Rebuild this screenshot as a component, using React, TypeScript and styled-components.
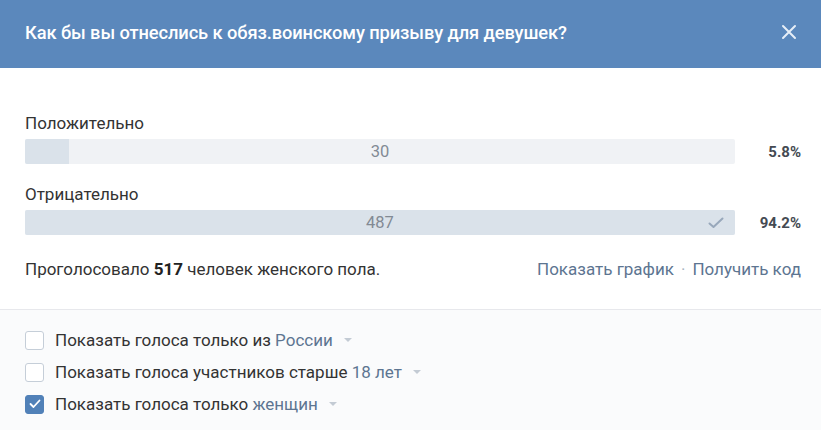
import React from "react";
import styled, { createGlobalStyle } from "styled-components";

const GlobalStyle = createGlobalStyle`
  html, body {
    margin: 0;
    padding: 0;
    background: #ffffff;
  }
  body {
    font-family: Roboto, "Open Sans", "Noto Sans", sans-serif;
    -webkit-font-smoothing: antialiased;
  }
`;

type Answer = { label: string; count: number; percent: string; mine?: boolean };

const answers: Answer[] = [
  { label: "Положительно", count: 30, percent: "5.8%" },
  { label: "Отрицательно", count: 487, percent: "94.2%", mine: true },
];

const maxCount = Math.max(...answers.map((a) => a.count));

type Filter = { text: string; value: string; checked?: boolean };

const filters: Filter[] = [
  { text: "Показать голоса только из", value: "России" },
  { text: "Показать голоса участников старше", value: "18 лет" },
  { text: "Показать голоса только", value: "женщин", checked: true },
];

export default function App() {
  return (
    <>
      <GlobalStyle />
      <Box>
        <Header>
          <Title>Как бы вы отнеслись к обяз.воинскому призыву для девушек?</Title>
          <Close aria-label="Закрыть">
            <svg width="16" height="16" viewBox="0 0 16 16">
              <path d="M2 2 L14 14 M14 2 L2 14" stroke="#e6eef7" strokeWidth="2" strokeLinecap="round" />
            </svg>
          </Close>
        </Header>
        <Results>
          {answers.map((a) => (
            <AnswerBlock key={a.label}>
              <AnswerLabel>{a.label}</AnswerLabel>
              <AnswerRow>
                <Bar>
                  <Fill style={{ width: `${(a.count / maxCount) * 100}%` }} />
                  <Count>{a.count}</Count>
                  {a.mine && (
                    <Check width="16" height="12" viewBox="0 0 16 12">
                      <path d="M1.5 6.5 L5.5 10 L14.5 1.5" fill="none" stroke="#98a8bb" strokeWidth="2" strokeLinecap="round" strokeLinejoin="round" />
                    </Check>
                  )}
                </Bar>
                <Percent>{a.percent}</Percent>
              </AnswerRow>
            </AnswerBlock>
          ))}
          <Summary>
            <span>
              Проголосовало <b>517</b> человек женского пола.
            </span>
            <Links>
              <Link>Показать график</Link>
              <Dot>·</Dot>
              <Link>Получить код</Link>
            </Links>
          </Summary>
        </Results>
        <Filters>
          {filters.map((f) => (
            <FilterRow key={f.value}>
              <CheckBox $checked={f.checked}>
                {f.checked && (
                  <svg width="12" height="10" viewBox="0 0 12 10">
                    <path d="M1.5 5 L4.5 8 L10.5 1.5" fill="none" stroke="#ffffff" strokeWidth="1.8" strokeLinecap="round" strokeLinejoin="round" />
                  </svg>
                )}
              </CheckBox>
              <FilterText>
                {f.text} <FilterValue>{f.value}</FilterValue>
              </FilterText>
              <Caret width="10" height="6" viewBox="0 0 10 6">
                <path d="M1 1 L5 5 L9 1 Z" fill="#c3cbd4" />
              </Caret>
            </FilterRow>
          ))}
        </Filters>
      </Box>
    </>
  );
}

const Box = styled.div`
  width: 821px;
  height: 430px;
  display: flex;
  flex-direction: column;
  background: #ffffff;
  overflow: hidden;
`;

const Header = styled.div`
  height: 68px;
  flex-shrink: 0;
  display: flex;
  align-items: center;
  justify-content: space-between;
  padding: 0 20px 4px 25px;
  box-sizing: border-box;
  background: #5b88bc;
`;

const Title = styled.div`
  color: #ffffff;
  font-size: 18.3px;
  font-weight: 500;
  letter-spacing: -0.1px;
`;

const Close = styled.div`
  width: 24px;
  height: 24px;
  display: flex;
  align-items: center;
  justify-content: center;
`;

const Results = styled.div`
  padding: 45px 20px 0 25px;
  display: flex;
  flex-direction: column;
  gap: 20px;
  height: 242px;
  box-sizing: border-box;
  border-bottom: 1px solid #e7e8ec;
  flex-shrink: 0;
`;

const AnswerBlock = styled.div`
  display: flex;
  flex-direction: column;
  gap: 6px;
`;

const AnswerLabel = styled.div`
  font-size: 17px;
  color: #333333;
  line-height: 20px;
`;

const AnswerRow = styled.div`
  display: flex;
  align-items: center;
`;

const Bar = styled.div`
  position: relative;
  width: 710px;
  height: 25px;
  background: #f0f2f5;
  border-radius: 2px;
  overflow: hidden;
  display: flex;
  align-items: center;
  justify-content: center;
`;

const Fill = styled.div`
  position: absolute;
  left: 0;
  top: 0;
  bottom: 0;
  background: #dae2ea;
`;

const Count = styled.span`
  position: relative;
  font-size: 16.5px;
  color: #828a94;
`;

const Check = styled.svg`
  position: absolute;
  right: 11px;
  top: 7px;
`;

const Percent = styled.div`
  flex: 1;
  text-align: right;
  font-size: 15px;
  font-weight: 700;
  color: #444a52;
`;

const Summary = styled.div`
  margin-top: 4px;
  display: flex;
  justify-content: space-between;
  align-items: center;
  font-size: 17px;
  line-height: 20px;
  color: #333333;
  b {
    font-weight: 700;
    color: #222222;
  }
`;

const Links = styled.div`
  display: flex;
  align-items: center;
  gap: 7px;
`;

const Link = styled.span`
  color: #5d7591;
`;

const Dot = styled.span`
  color: #a8b3c0;
`;

const Filters = styled.div`
  flex: 1;
  background: #fafbfc;
  padding: 20px 25px 0;
  display: flex;
  flex-direction: column;
  gap: 12px;
`;

const FilterRow = styled.div`
  display: flex;
  align-items: center;
  height: 20px;
`;

const CheckBox = styled.div<{ $checked?: boolean }>`
  width: 19px;
  height: 19px;
  box-sizing: border-box;
  border-radius: 3px;
  border: 1px solid ${(p) => (p.$checked ? "#5181b8" : "#c5ced8")};
  background: ${(p) => (p.$checked ? "#5181b8" : "#ffffff")};
  display: flex;
  align-items: center;
  justify-content: center;
  margin-right: 11px;
`;

const FilterText = styled.span`
  font-size: 17px;
  color: #333333;
`;

const FilterValue = styled.span`
  color: #5d7591;
`;

const Caret = styled.svg`
  margin-left: 10px;
`;
